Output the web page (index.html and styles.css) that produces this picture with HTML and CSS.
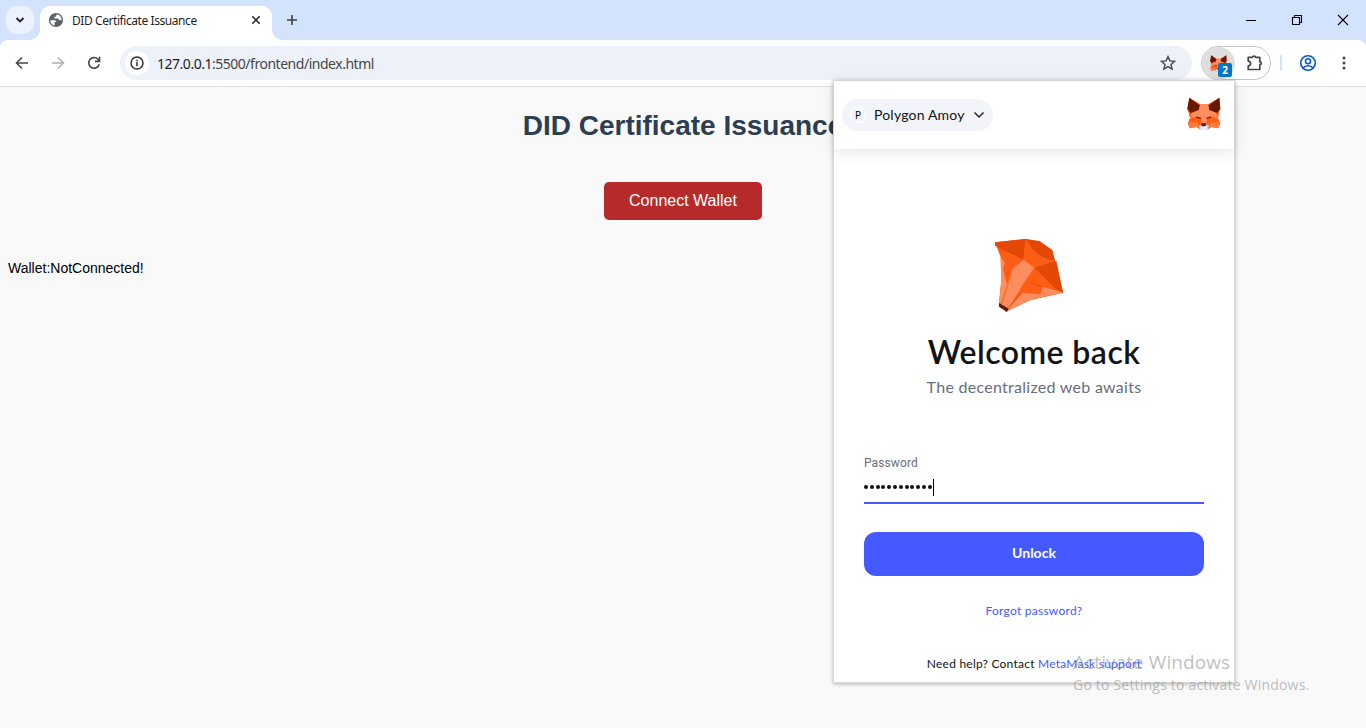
FILE: index.html
```html
<!DOCTYPE html>
<html lang="en">
<head>
<meta charset="utf-8">
<title>DID Certificate Issuance</title>
<link rel="stylesheet" href="styles.css">
</head>
<body>
<div class="browser">
  <div class="tabstrip">
    <div class="tab-search"><svg width="10" height="8" viewBox="0 0 10 8"><path d="M1.5 2l3.5 3.5L8.500 2" fill="none" stroke="#1f1f1f" stroke-width="1.8"/></svg></div>
    <div class="tab">
      <svg width="16" height="16" viewBox="0 0 16 16"><circle cx="8" cy="8" r="7.100" fill="#5f6368"/><path d="M2.300 8.300h4c1.500 0 2 .8 2 1.800H6.600v3.500C4 13.100 2.300 11 2.300 8.300zM9.600 2.500c-1 0-1.500.6-1.500 1.300v1H6.300v1.800h3c1 0 1.500.6 1.500 1.500h1.600l1 1c.6-2.800-.8-5.700-3.800-6.600z" fill="#fff"/></svg>
      <span class="tab-title">DID Certificate Issuance</span>
      <svg class="tab-close" width="10" height="10" viewBox="0 0 10 10"><path d="M1.300 1.300l7.400 7.400M8.700 1.300L1.300 8.700" stroke="#1f1f1f" stroke-width="1.500"/></svg>
    </div>
    <svg class="new-tab" width="12" height="12" viewBox="0 0 12 12"><path d="M6 1v10M1 6h10" stroke="#3c4043" stroke-width="1.600"/></svg>
    <div class="window-controls">
      <svg width="12" height="12" viewBox="0 0 12 12"><path d="M1 6.500h10" stroke="#000"/></svg>
      <svg width="12" height="12" viewBox="0 0 12 12"><path d="M1.500 3.500h7v7h-7zM3.500 3.500v-2h7v7h-2" fill="none" stroke="#000" stroke-width="1.100"/></svg>
      <svg width="12" height="12" viewBox="0 0 12 12"><path d="M1 1l10 10M11 1L1 11" stroke="#000" stroke-width="1.100"/></svg>
    </div>
  </div>
  <div class="toolbar">
    <div class="nav">
      <svg width="16" height="16" viewBox="0 0 16 16"><path d="M14 8H3M8 2.500L2.500 8 8 13.500" fill="none" stroke="#474747" stroke-width="1.600"/></svg>
      <svg width="16" height="16" viewBox="0 0 16 16"><path d="M2 8h11M8 2.500L13.500 8 8 13.500" fill="none" stroke="#b0b0b0" stroke-width="1.600"/></svg>
      <svg width="16" height="16" viewBox="0 0 16 16"><path d="M13.200 9.200A5.300 5.300 0 1 1 11.900 4.200L13.300 5.700M13.500 1.800v4.600H9" fill="none" stroke="#474747" stroke-width="1.600"/></svg>
    </div>
    <div class="omnibox">
      <div class="site-info"><svg width="14" height="14" viewBox="0 0 14 14"><circle cx="7" cy="7" r="6" fill="none" stroke="#303134" stroke-width="1.500"/><path d="M7 6v4.300M7 3.700v1.500" stroke="#303134" stroke-width="1.500"/></svg></div>
      <div class="url">127.0.0.1<span>:5500/frontend/index.html</span></div>
      <svg class="star" width="16" height="16" viewBox="0 0 16 16"><path d="M8 1.600l1.900 4.300 4.700.4-3.600 3.100 1.100 4.600L8 11.600 3.900 14 5 9.400 1.400 6.300l4.700-.4z" fill="none" stroke="#474747" stroke-width="1.400"/></svg>
    </div>
    <div class="extensions">
      <div class="ext-active">
        <svg width="17" height="17" viewBox="50 35 102 102"><use href="#fox"/></svg>
        <span class="badge">2</span>
      </div>
      <svg class="puzzle" width="18" height="18" viewBox="0 0 18 18"><path d="M2.200 3.300h4.300C6.500 1.700 9.500 1.700 9.500 3.300h4.300v4.500c2 0 2 3 0 3v4.700H2.200v-3.600c3.200-.3 3.200-4.500 0-4.800z" fill="none" stroke="#474747" stroke-width="1.700" stroke-linejoin="round"/></svg>
    </div>
    <div class="divider"></div>
    <svg class="profile" width="18" height="18" viewBox="0 0 18 18" fill="none" stroke="#0b57d0" stroke-width="1.600"><circle cx="9" cy="9" r="7.300"/><circle cx="9" cy="7.200" r="2.500"/><path d="M3.800 14c2.600-3 7.800-3 10.400 0"/></svg>
    <svg class="more" width="4" height="16" viewBox="0 0 4 16" fill="#474747"><circle cx="2" cy="3" r="1.500"/><circle cx="2" cy="8" r="1.500"/><circle cx="2" cy="13" r="1.500"/></svg>
  </div>
  <main class="page">
    <h1>DID Certificate Issuance</h1>
    <button class="connect">Connect Wallet</button>
    <p class="status">Wallet:NotConnected!</p>
  </main>
</div>

<section class="popup">
  <header class="popup-header">
    <div class="network"><span class="network-icon">P</span><span class="network-name">Polygon Amoy</span>
      <svg width="12" height="8" viewBox="0 0 12 8"><path d="M1.500 1.500L6 6l4.500-4.500" fill="none" stroke="#24272a" stroke-width="1.500"/></svg></div>
    <svg class="fox" width="34" height="34" viewBox="50 35 102 102">
      <g id="fox">
        <path d="M57 37l33 20h23l34-20 3 33-7 28 7 16-6 15-21-4-9 7H88l-9-7-21 4-6-15 7-16-8-29z" fill="#ff5c16"/>
        <path d="M90 57h23l10 36-12 8-3 14H95l-4-14-14-8z" fill="#ff8d5d"/>
        <path d="M57 37l31 23-3 15-23 8-11-11zM147 37l3 33-10 13-23-8-2-15z" fill="#661800"/>
        <path d="M64 83l21-9-5 19-21 8zM138 83l-21-9 5 19 21 7z" fill="#ff8d5d"/>
        <path d="M78 93l15 4-2 5-13-5zM122 93l-14 4 1 5 13-5z" fill="#8b2500"/>
        <path d="M52 111h27l7 10-7 4-21 4zM150 111h-27l-7 10 7 4 21 4z" fill="#ff7a3d"/>
        <path d="M85 122l8-6h16l9 6-5 10H88z" fill="#c0c4cd"/>
        <path d="M92 121h17l3 8-4 4H92l-3-4z" fill="#e7ebf6"/>
        <path d="M94 114h12l2 5-5 4h-6l-5-4z" fill="#661800"/>
      </g>
    </svg>
  </header>
  <div class="popup-body">
    <svg class="mascot" width="70" height="74" viewBox="42 24 210 222">
      <path d="M45 37l92-10 42 7 38 27 33 127-100 23-72 34-21-24 7-72V87z" fill="#ff5c16"/>
      <path d="M45 37l92-10-7 62-66-32-19-10zM137 27l42 7 38 27 7 31c-42-4-68-30-87-65zM163 113l66-21 20 96-22-12z" fill="#e34807"/>
      <path d="M137 27l-7 62 33 24 63-20c-44-6-70-30-89-66z" fill="#ff5c16"/>
      <path d="M130 89l33 24-33 48-48 82-18-18 20-62 13-46zM61 82l15 17-7 15 10 44 7 5-21 58-8-2 7-70zM128 188l53 5 7-23 61 17-99 23-68 31z" fill="#ff8d5d"/>
      <path d="M64 222l20-59M80 237l45-49M143 156l45 14" stroke="#e34807" stroke-width="2"/>
      <path d="M57 219l29 17-5 10-24-16z" fill="#661800"/>
    </svg>
    <h2>Welcome back</h2>
    <p class="tagline">The decentralized web awaits</p>
    <div class="field">
      <label>Password</label>
      <div class="password"><span class="dots"><i></i><i></i><i></i><i></i><i></i><i></i><i></i><i></i><i></i><i></i><i></i><i></i></span><span class="caret"></span></div>
    </div>
    <button class="unlock">Unlock</button>
    <a class="forgot">Forgot password?</a>
    <p class="help">Need help? Contact <a>MetaMask support</a></p>
  </div>
</section>
<aside class="watermark"><div class="wm-title">Activate Windows</div><div class="wm-text">Go to Settings to activate Windows.</div></aside>
</body>
</html>
```

FILE: styles.css
```css
* { box-sizing: border-box; }
body { margin: 0; width: 1366px; height: 728px; overflow: hidden; position: relative; font-family: "Liberation Sans", Arial, sans-serif; }
svg { display: block; flex: none; }
h1, h2, p { margin: 0; font-weight: normal; white-space: nowrap; }
button { border: 0; font: inherit; display: block; padding: 0; }
.browser { height: 728px; display: flex; flex-direction: column; background: #d3e3fd; }
.tabstrip { height: 40px; display: flex; align-items: center; padding-left: 6px; flex: none; }
.tab-search { width: 28px; height: 28px; border-radius: 10px; background: #ebf1fd; display: flex; align-items: center; justify-content: center; }
.tab { position: relative; align-self: flex-end; width: 232px; height: 34px; margin-left: 6px; padding: 0 11px 6px 8px; background: #fff; border-radius: 10px 10px 0 0; display: flex; align-items: center; }
.tab::before, .tab::after { content: ""; position: absolute; bottom: 0; width: 10px; height: 10px; }
.tab::before { left: -10px; background: radial-gradient(circle at 0 0, #d3e3fd 9.5px, #fff 10px); }
.tab::after { right: -10px; background: radial-gradient(circle at 100% 0, #d3e3fd 9.5px, #fff 10px); }
.tab-title { font: 12px "Noto Sans", sans-serif; letter-spacing: -.43px; color: #1f1f1f; margin-left: 8px; white-space: nowrap; }
.tab-close { margin-left: auto; }
.new-tab { margin-left: 14px; }
.window-controls { margin-left: auto; display: flex; gap: 34px; padding-right: 17px; }
.toolbar { height: 47px; flex: none; background: #fff; border-bottom: 1px solid #dfe1e4; border-radius: 8px 8px 0 0; display: flex; align-items: center; padding: 0 20px 0 14px; }
.nav { display: flex; gap: 20px; }
.omnibox { width: 1072px; height: 34px; margin-left: 18px; border-radius: 17px; background: #ecf1fa; display: flex; align-items: center; padding: 0 16px 0 5px; }
.site-info { width: 24px; height: 24px; border-radius: 50%; background: #fff; display: flex; align-items: center; justify-content: center; }
.url { margin-left: 8px; font: 14px "Noto Sans", sans-serif; letter-spacing: -.48px; color: #1f1f1f; white-space: nowrap; }
.url span { color: #474747; }
.star { margin-left: auto; }
.extensions { width: 70px; height: 34px; margin-left: 9px; border: 1px solid #c4c7c5; border-radius: 17px; display: flex; align-items: center; }
.ext-active { position: relative; width: 33px; height: 33px; border-radius: 17px; background: #dedede; padding: 8px; }
.badge { position: absolute; left: 16px; top: 16px; width: 14px; height: 14px; border-radius: 2px; background: #0376c9; color: #fff; font: bold 10px/14px "Open Sans", sans-serif; text-align: center; }
.puzzle { margin-left: 11px; }
.divider { width: 2px; height: 16px; background: #d3e3fd; margin-left: 9px; }
.profile { margin-left: 17px; }
.more { margin-left: auto; }
.page { flex: 1; background: #f9f9f9; display: flex; flex-direction: column; align-items: center; padding: 23px 8px 0; }
.page h1 { font-size: 28px; line-height: 32px; font-weight: bold; color: #2c3e50; }
.connect { width: 158px; height: 38px; margin-top: 40px; border-radius: 5px; background: #b72a2a; color: #fff; font-size: 16px; }
.status { align-self: flex-start; margin-top: 40px; font-size: 14px; line-height: 16px; color: #000; }
.popup { position: absolute; left: 834px; top: 81px; width: 400px; height: 601px; background: #fff; box-shadow: 0 0 0 1px #dcdcdc, 0 1px 4px 1px rgba(0,0,0,.28); font-family: Lato, sans-serif; }
.popup-header { height: 68px; display: flex; align-items: center; justify-content: space-between; padding: 0 13px 0 8px; box-shadow: 0 3px 15px rgba(0,0,0,.1); }
.network { width: 151px; height: 32px; border-radius: 16px; background: #f2f4f9; display: flex; align-items: center; padding-left: 8px; }
.network-icon { width: 16px; height: 16px; border: 1px solid #fff; border-radius: 6px; font: 10px/14px "Noto Sans", sans-serif; text-align: center; color: #000; }
.network-name { width: 107px; padding: 0 0 2px 8px; font-size: 14px; letter-spacing: .2px; color: #121314; }
.fox { margin-top: -3px; }
.popup-body { display: flex; flex-direction: column; align-items: center; padding: 89px 30px 0; }
.mascot { align-self: flex-start; margin-left: 130px; }
.popup h2 { margin-top: 20px; font-size: 32px; line-height: 40px; font-weight: 600; color: #121314; letter-spacing: .45px; }
.tagline { margin-top: 4px; font-size: 16px; line-height: 22px; letter-spacing: .28px; color: #686e7d; }
.field { width: 340px; height: 49px; margin-top: 57px; border-bottom: 2px solid #4459ff; }
.field label { display: block; font: 12px/16px Roboto, sans-serif; letter-spacing: .1px; color: #686e7d; }
.password { display: flex; align-items: center; height: 18px; margin-top: 7px; }
.dots { display: flex; gap: 1.8px; }
.dots i { width: 4px; height: 4px; border-radius: 50%; background: #111; }
.caret { width: 1px; height: 17px; background: #000; margin-left: 1px; }
.unlock { width: 340px; height: 44px; margin-top: 28px; padding-bottom: 3px; border-radius: 12px; background: #4459ff; color: #fff; font-size: 14px; font-weight: bold; }
.forgot { margin-top: 27px; font-size: 12px; line-height: 16px; letter-spacing: .25px; color: #4459ff; }
.help { margin-top: 37px; font-size: 12px; line-height: 16px; letter-spacing: .23px; color: #121314; }
.help a { color: #4459ff; }
.watermark { position: absolute; left: 1073px; top: 651px; color: rgba(130,130,130,.52); font-family: "Open Sans", sans-serif; white-space: nowrap; }
.wm-title { font-size: 19px; line-height: 23px; letter-spacing: .08px; }
.wm-text { font-size: 14px; line-height: 22px; letter-spacing: .2px; }
```
